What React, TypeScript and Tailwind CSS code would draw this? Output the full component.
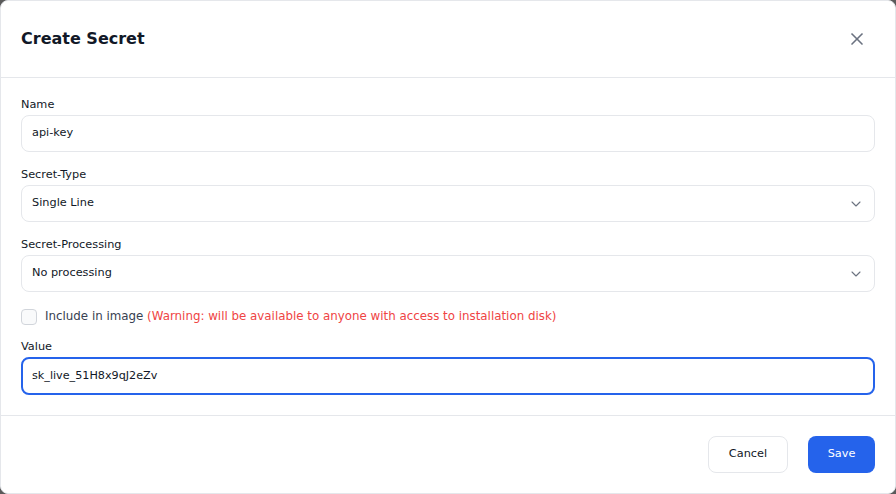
import React from "react";
import { X, ChevronDown } from "lucide-react";

const font = { fontFamily: '"DejaVu Sans", "Liberation Sans", sans-serif' };

function Field({ label, children }: { label: string; children: React.ReactNode }) {
  return (
    <div className="flex flex-col gap-[2px]">
      <label className="text-[11.3px] leading-[16px] text-[#111827]">{label}</label>
      {children}
    </div>
  );
}

function SelectBox({ value }: { value: string }) {
  return (
    <div className="flex h-[37px] items-center justify-between rounded-lg border border-[#e5e7eb] bg-white pl-[10px] pr-[10px]">
      <span className="text-[11.3px] text-[#111827]">{value}</span>
      <ChevronDown size={16} strokeWidth={1.6} className="text-[#6b7280]" />
    </div>
  );
}

export default function App() {
  return (
    <div className="h-[494px] w-[896px] bg-[#5a5a5a]" style={font}>
      <div className="flex h-[494px] w-[896px] flex-col rounded-lg border border-[#e5e7eb] bg-white">
        <div className="flex h-[77px] items-center justify-between border-b border-[#e5e7eb] pl-[20px] pr-[28px]">
          <h2 className="text-[16px] font-bold text-[#111827]">Create Secret</h2>
          <X size={20} strokeWidth={2} className="text-[#6b7280]" />
        </div>
        <div className="flex flex-col border-b border-[#e5e7eb] px-[20px] pb-[20px] pt-[19px]">
          <div className="flex flex-col gap-[15px]">
            <Field label="Name">
              <div className="flex h-[37px] items-center rounded-lg border border-[#e5e7eb] px-[10px] text-[11.3px] text-[#111827]">
                api-key
              </div>
            </Field>
            <Field label="Secret-Type">
              <SelectBox value="Single Line" />
            </Field>
            <Field label="Secret-Processing">
              <SelectBox value="No processing" />
            </Field>
          </div>
          <div className="mt-[17px] flex h-[16px] items-center gap-[8px]">
            <div className="h-[16px] w-[16px] rounded-[4px] border border-[#d1d5db] bg-[#f9fafb]" />
            <span className="text-[11.85px] text-[#374151]">
              Include in image{" "}
              <span className="text-[#ef4444]">
                (Warning: will be available to anyone with access to installation disk)
              </span>
            </span>
          </div>
          <div className="mt-[14px]">
            <Field label="Value">
              <div className="flex h-[38px] items-center rounded-lg border-2 border-[#2563eb] px-[9px] text-[11.2px] text-[#111827]">
                sk_live_51H8x9qJ2eZv
              </div>
            </Field>
          </div>
        </div>
        <div className="flex flex-1 items-center justify-end gap-[20px] px-[20px]">
          <button className="h-[37px] w-[80px] rounded-lg border border-[#e5e7eb] bg-white text-[11.3px] text-[#111827]">
            Cancel
          </button>
          <button className="h-[37px] w-[67px] rounded-lg bg-[#2563eb] text-[11.3px] text-white">
            Save
          </button>
        </div>
      </div>
    </div>
  );
}
